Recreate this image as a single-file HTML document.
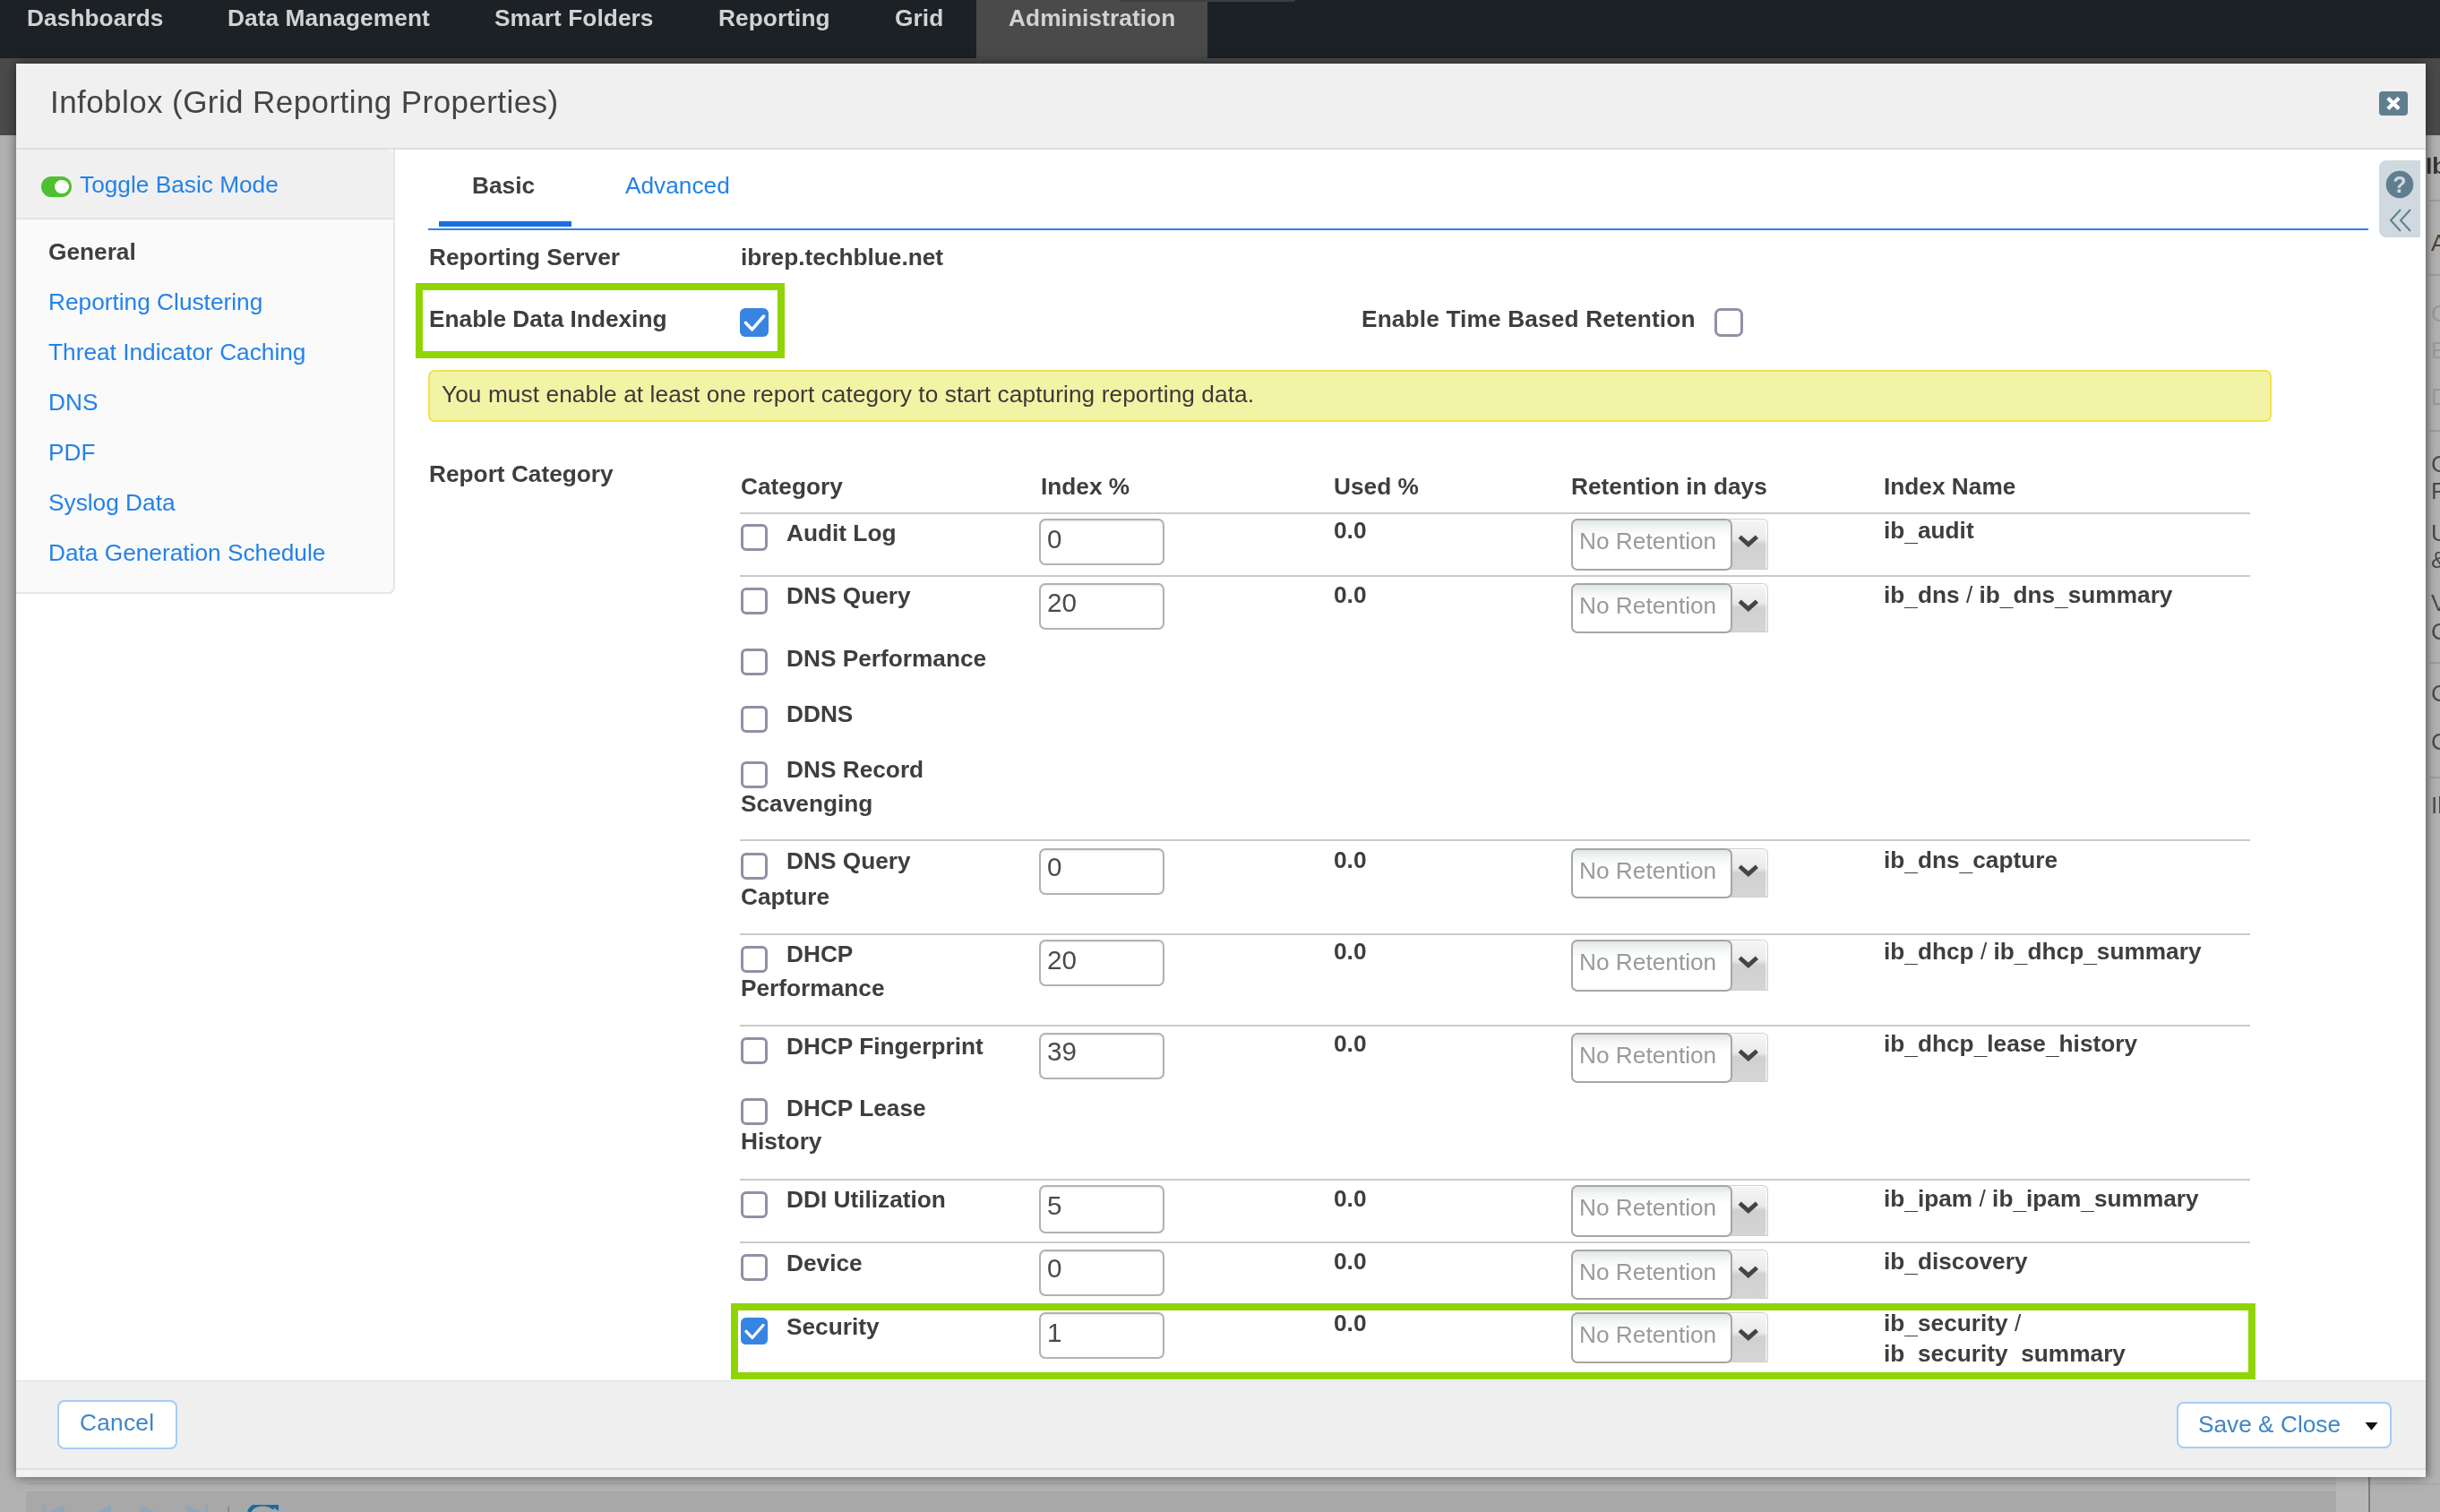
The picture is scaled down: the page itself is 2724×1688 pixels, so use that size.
<!DOCTYPE html><html lang="en"><head><meta charset="utf-8"><title>Infoblox (Grid Reporting Properties)</title><style>
*{box-sizing:border-box;margin:0;padding:0}
html,body{width:2724px;height:1688px;overflow:hidden}
body{position:relative;background:#b2b2b2;font-family:"Liberation Sans",sans-serif;font-size:26.25px;color:#333;}
.a{position:absolute}
.t{position:absolute;display:block;will-change:transform;white-space:nowrap;line-height:30px;height:30px;font-size:26.25px}
.b{font-weight:bold;color:#3e3e3e}
.u{position:relative;top:2.6px}
.lnk{color:#2482e8}
.nav{color:#d2d2d2;font-weight:bold}
.hl{position:absolute;height:2px;background:#cacaca;left:826px;width:1686px}
.cb{position:absolute;width:30px;height:30px;border:3px solid #9190a6;border-radius:6px;background:#fff}
.cbc{position:absolute;width:32px;height:32px;border-radius:6px;background:#3884e2}
.inp{position:absolute;left:1160px;width:140px;border:2px solid #b2b2b2;border-radius:7px;background:#fff;box-shadow:inset 0 1px 2px rgba(0,0,0,.10)}
.cmb{position:absolute;left:1754px;width:180px;border:2px solid #a6a6a6;border-radius:7px;background:linear-gradient(#dfe5e7 0,#f3f5f5 8px,#fff 19px);z-index:2}
.trg{position:absolute;left:1930px;width:44px;border:1px solid #cfcfd6;border-left:none;border-radius:0 6px 0 0;background:linear-gradient(#f6f6f6 0,#eaeaea 40%,#d0d0d0 50%,#d5d5d5 100%);box-shadow:inset -2px 1px 0 rgba(255,255,255,.55);z-index:1}
.gbox{position:absolute;border:8px solid #91d404;z-index:5}
</style></head><body>
<div class="a" style="left:0px;top:0px;width:2724px;height:65px;background:#1c2126"></div>
<div class="a" style="left:0px;top:65px;width:2724px;height:86px;background:#4a4a4a"></div>
<div class="a" style="left:1090px;top:0px;width:258px;height:70px;background:#4a4a4a"></div>
<div class="a" style="left:1250px;top:0px;width:196px;height:2px;background:#3b3d40;border-radius:0 0 4px 4px"></div>
<div class="t nav" style="left:29.8px;top:4.7px;letter-spacing:.08px">Dashboards</div>
<div class="t nav" style="left:254.2px;top:4.7px;letter-spacing:.08px">Data Management</div>
<div class="t nav" style="left:551.9px;top:4.7px;letter-spacing:.08px">Smart Folders</div>
<div class="t nav" style="left:801.8px;top:4.7px;letter-spacing:.08px">Reporting</div>
<div class="t nav" style="left:999.2px;top:4.7px;letter-spacing:.08px">Grid</div>
<div class="t nav" style="left:1126.0px;top:4.7px;letter-spacing:.08px">Administration</div>
<div class="a" style="left:29px;top:1665px;width:2579px;height:23px;background:#a8a8a8"></div>
<div class="a" style="left:29px;top:1656px;width:2695px;height:1px;background:#a3a3a3"></div>
<div class="a" style="left:2608px;top:1649px;width:37px;height:39px;background:#b8b8b8"></div>
<div class="a" style="left:2644px;top:1649px;width:2px;height:39px;background:#7d7d7d"></div>
<div class="a" style="left:2708px;top:151px;width:16px;height:1498px;background:linear-gradient(90deg,#9c9c9c 0,#acacac 5px,#b2b2b2 10px)"></div>
<div class="t b" style="left:2708.0px;top:170.0px;color:#333">Ib</div>
<div class="a" style="left:2712px;top:223px;width:12px;height:2px;background:#9c9c9c"></div>
<div class="a" style="left:2712px;top:306px;width:12px;height:2px;background:#9c9c9c"></div>
<div class="a" style="left:2712px;top:480px;width:12px;height:2px;background:#9c9c9c"></div>
<div class="a" style="left:2712px;top:739px;width:12px;height:2px;background:#9c9c9c"></div>
<div class="a" style="left:2712px;top:867px;width:12px;height:2px;background:#9c9c9c"></div>
<div class="t " style="left:2713.5px;top:256.0px;color:#4d4438">A</div>
<div class="t " style="left:2713.5px;top:335.0px;color:#9a9a9a">C</div>
<div class="t " style="left:2713.5px;top:376.0px;color:#9a9a9a">E</div>
<div class="t " style="left:2713.5px;top:428.0px;color:#9a9a9a">D</div>
<div class="t " style="left:2713.5px;top:503.0px;color:#4a4a4a">G</div>
<div class="t " style="left:2713.5px;top:533.0px;color:#4a4a4a">F</div>
<div class="t " style="left:2713.5px;top:580.0px;color:#4a4a4a">U</div>
<div class="t " style="left:2713.5px;top:610.0px;color:#4a4a4a">&amp;</div>
<div class="t " style="left:2713.5px;top:658.0px;color:#4a4a4a">V</div>
<div class="t " style="left:2713.5px;top:690.0px;color:#4a4a4a">C</div>
<div class="t " style="left:2713.5px;top:759.0px;color:#4a4a4a">C</div>
<div class="t " style="left:2713.5px;top:813.0px;color:#4a4a4a">C</div>
<div class="t " style="left:2713.5px;top:884.0px;color:#4a4a4a">Il</div>
<svg class="a" style="left:48px;top:1680px" width="26" height="8" viewBox="0 0 26 8"><path d="M0 0 L3 0 L3 8 L0 8 Z M24 0 L24 8 L6 8 Z" fill="#8fa6b8"/></svg>
<svg class="a" style="left:108px;top:1680px" width="26" height="8" viewBox="0 0 26 8"><path d="M16 0 L16 8 L0 8 Z" fill="#8fa6b8"/></svg>
<svg class="a" style="left:157px;top:1680px" width="26" height="8" viewBox="0 0 26 8"><path d="M0 0 L0 8 L16 8 Z" fill="#8fa6b8"/></svg>
<svg class="a" style="left:208px;top:1680px" width="26" height="8" viewBox="0 0 26 8"><path d="M0 0 L0 8 L18 8 Z M21 0 L24 0 L24 8 L21 8 Z" fill="#8fa6b8"/></svg>
<div class="a" style="left:254px;top:1682px;width:2px;height:6px;background:#8a8a8a"></div>
<svg class="a" style="left:276px;top:1680px" width="36" height="8" viewBox="0 0 36 8"><path d="M2 8 A16 12 0 0 1 30 4" fill="none" stroke="#1d6aa3" stroke-width="4.5"/><path d="M26 0 L35 0 L35 7 Z" fill="#1d6aa3"/></svg>
<div class="a" style="left:18px;top:71px;width:2690px;height:1578px;background:#fff;box-shadow:0 0 12px rgba(0,0,0,.5)"></div>
<div class="a" style="left:18px;top:71px;width:2690px;height:95px;background:#f0f0f0"></div>
<div class="a" style="left:18px;top:165px;width:2690px;height:2px;background:#dedede"></div>
<h1 class="t " style="left:55.8px;top:93.0px;font-size:35px;line-height:42px;height:42px;color:#444;letter-spacing:.42px;font-weight:normal">Infoblox (Grid Reporting Properties)</h1>
<div class="a" style="left:2656px;top:102px;width:32px;height:27px;background:#5f7f8f;border-radius:4px"><svg width="32" height="27" viewBox="0 0 32 27"><path d="M9.8 7.4 L22.2 19.6 M22.2 7.4 L9.8 19.6" stroke="#fff" stroke-width="4.2" stroke-linecap="butt"/></svg></div>
<div class="a" style="left:18px;top:167px;width:423px;height:496px;background:#fafafa;border-right:2px solid #e6e6e6;border-bottom:2px solid #e6e6e6;border-radius:0 0 7px 0"></div>
<div class="a" style="left:18px;top:167px;width:421px;height:77px;background:#f0f0f0;border-radius:0 7px 0 0"></div>
<div class="a" style="left:18px;top:243px;width:421px;height:2px;background:#e2e2e2"></div>
<div class="a" style="left:46px;top:196.5px;width:34px;height:23.5px;border-radius:12px;background:#4fc02f"><div class="a" style="left:15px;top:4px;width:15.5px;height:15.5px;border-radius:50%;background:#fff"></div></div>
<a class="t lnk" style="left:88.6px;top:190.6px;">Toggle Basic Mode</a>
<div class="t b" style="left:54.3px;top:266.4px;">General</div>
<a class="t lnk" style="left:54.3px;top:322.0px;">Reporting Clustering</a>
<a class="t lnk" style="left:54.3px;top:378.0px;">Threat Indicator Caching</a>
<a class="t lnk" style="left:54.3px;top:434.0px;">DNS</a>
<a class="t lnk" style="left:54.3px;top:490.0px;">PDF</a>
<a class="t lnk" style="left:54.3px;top:546.0px;">Syslog Data</a>
<a class="t lnk" style="left:54.3px;top:602.0px;">Data Generation Schedule</a>
<div class="t b" style="left:526.8px;top:192.0px;">Basic</div>
<a class="t lnk" style="left:698.0px;top:192.0px;">Advanced</a>
<div class="a" style="left:490px;top:247px;width:148px;height:6px;background:#1b6fe0"></div>
<div class="a" style="left:478px;top:255px;width:2166px;height:2px;background:#2b84e8"></div>
<div class="a" style="left:2656px;top:179px;width:46px;height:86px;background:#d0d9df;border-radius:8px 0 0 8px"></div>
<svg class="a" style="left:2663px;top:190px" width="32" height="32" viewBox="0 0 32 32"><circle cx="16" cy="16" r="15.3" fill="#5f7f8f"/><text x="16" y="25" text-anchor="middle" font-family="Liberation Sans, sans-serif" font-weight="bold" font-size="25" fill="#d0d9df">?</text></svg>
<svg class="a" style="left:2666px;top:232px" width="28" height="28" viewBox="0 0 28 28"><path d="M14 2 L3 14 L14 26 M25 2 L14 14 L25 26" fill="none" stroke="#5f7f8f" stroke-width="2"/></svg>
<div class="t b" style="left:478.8px;top:272.0px;">Reporting Server</div>
<div class="t b" style="left:826.9px;top:272.0px;">ibrep.techblue.net</div>
<div class="t b" style="left:478.8px;top:341.0px;">Enable Data Indexing</div>
<div class="t b" style="left:1519.8px;top:341.4px;letter-spacing:.15px">Enable Time Based Retention</div>
<div class="cbc" style="left:826px;top:343.5px;height:32.5px"><svg width="32" height="32" viewBox="0 0 32 32" style="position:absolute;left:0;top:0"><path d="M6.4 16.3 L13.6 23.9 L26.6 9" fill="none" stroke="#fff" stroke-width="3.5" stroke-linecap="round" stroke-linejoin="round"/></svg></div>
<div class="cb" style="left:1914px;top:344px;width:32px;height:32px;border-radius:7px"></div>
<div class="gbox" style="left:464px;top:316px;width:412px;height:84px"></div>
<div class="a" style="left:478px;top:413px;width:2058px;height:58px;background:#f3f3a6;border:2px solid #f2e24c;border-radius:7px"></div>
<div class="t " style="left:493.4px;top:424.8px;color:#3a3a3a;letter-spacing:.08px">You must enable at least one report category to start capturing reporting data.</div>
<div class="t b" style="left:478.8px;top:514.0px;">Report Category</div>
<div class="t b" style="left:827.0px;top:528.0px;">Category</div>
<div class="t b" style="left:1161.5px;top:528.0px;">Index %</div>
<div class="t b" style="left:1489.3px;top:528.0px;">Used %</div>
<div class="t b" style="left:1754.0px;top:528.0px;">Retention in days</div>
<div class="t b" style="left:2103.3px;top:528.0px;">Index Name</div>
<div class="hl" style="top:572px"></div>
<div class="hl" style="top:642px"></div>
<div class="hl" style="top:937px"></div>
<div class="hl" style="top:1042px"></div>
<div class="hl" style="top:1144px"></div>
<div class="hl" style="top:1316px"></div>
<div class="hl" style="top:1386px"></div>
<div class="a" style="left:0;top:0;width:2724px;height:1525px;overflow:hidden">
<div class="cb" style="left:827px;top:585.0px"></div>
<div class="t b" style="left:878.0px;top:580.3px;">Audit Log</div>
<div class="inp" style="top:579px;height:52px"></div>
<div class="t " style="left:1169.4px;top:584.1px;font-size:29.6px;line-height:36px;height:36px;color:#4a4a4a">0</div>
<div class="t b" style="left:1489.0px;top:576.7px;">0.0</div>
<div class="cmb" style="top:579px;height:58px"></div>
<div class="t " style="left:1762.6px;top:589.1px;color:#9a9a9a;z-index:3">No Retention</div>
<div class="trg" style="top:579px;height:57px"><svg width="44" height="57" viewBox="0 0 44 57" style="position:absolute;left:0;top:0"><path d="M12.2 19.2 L21.8 27.8 L31.4 19.2" fill="none" stroke="#444" stroke-width="4.8"/></svg></div>
<div class="t b" style="left:2103.3px;top:576.7px;">ib<span class="u">_</span>audit</div>
<div class="cb" style="left:827px;top:655.5px"></div>
<div class="t b" style="left:878.0px;top:650.0px;">DNS Query</div>
<div class="inp" style="top:651px;height:52px"></div>
<div class="t " style="left:1169.4px;top:654.5px;font-size:29.6px;line-height:36px;height:36px;color:#4a4a4a">20</div>
<div class="t b" style="left:1489.0px;top:648.6px;">0.0</div>
<div class="cmb" style="top:651px;height:56px"></div>
<div class="t " style="left:1762.6px;top:661.3px;color:#9a9a9a;z-index:3">No Retention</div>
<div class="trg" style="top:651px;height:55px"><svg width="44" height="55" viewBox="0 0 44 55" style="position:absolute;left:0;top:0"><path d="M12.2 19.2 L21.8 27.8 L31.4 19.2" fill="none" stroke="#444" stroke-width="4.8"/></svg></div>
<div class="t b" style="left:2103.3px;top:648.6px;">ib<span class="u">_</span>dns <span style="font-weight:normal">/</span> ib<span class="u">_</span>dns<span class="u">_</span>summary</div>
<div class="cb" style="left:827px;top:723.8px"></div>
<div class="t b" style="left:878.0px;top:720.4px;">DNS Performance</div>
<div class="cb" style="left:827px;top:787.6px"></div>
<div class="t b" style="left:878.0px;top:782.0px;">DDNS</div>
<div class="cb" style="left:827px;top:849.8px"></div>
<div class="t b" style="left:878.0px;top:844.0px;">DNS Record</div>
<div class="t b" style="left:827.0px;top:881.5px;">Scavenging</div>
<div class="cb" style="left:827px;top:951.6px"></div>
<div class="t b" style="left:878.0px;top:945.7px;">DNS Query</div>
<div class="t b" style="left:827.0px;top:986.0px;">Capture</div>
<div class="inp" style="top:947px;height:52px"></div>
<div class="t " style="left:1169.4px;top:950.0px;font-size:29.6px;line-height:36px;height:36px;color:#4a4a4a">0</div>
<div class="t b" style="left:1489.0px;top:944.5px;">0.0</div>
<div class="cmb" style="top:947px;height:56px"></div>
<div class="t " style="left:1762.6px;top:957.3px;color:#9a9a9a;z-index:3">No Retention</div>
<div class="trg" style="top:947px;height:55px"><svg width="44" height="55" viewBox="0 0 44 55" style="position:absolute;left:0;top:0"><path d="M12.2 19.2 L21.8 27.8 L31.4 19.2" fill="none" stroke="#444" stroke-width="4.8"/></svg></div>
<div class="t b" style="left:2103.3px;top:944.5px;">ib<span class="u">_</span>dns<span class="u">_</span>capture</div>
<div class="cb" style="left:827px;top:1055.5px"></div>
<div class="t b" style="left:878.0px;top:1050.0px;">DHCP</div>
<div class="t b" style="left:827.0px;top:1088.4px;">Performance</div>
<div class="inp" style="top:1049px;height:52px"></div>
<div class="t " style="left:1169.4px;top:1054.2px;font-size:29.6px;line-height:36px;height:36px;color:#4a4a4a">20</div>
<div class="t b" style="left:1489.0px;top:1046.7px;">0.0</div>
<div class="cmb" style="top:1049px;height:58px"></div>
<div class="t " style="left:1762.6px;top:1059.0px;color:#9a9a9a;z-index:3">No Retention</div>
<div class="trg" style="top:1049px;height:57px"><svg width="44" height="57" viewBox="0 0 44 57" style="position:absolute;left:0;top:0"><path d="M12.2 19.2 L21.8 27.8 L31.4 19.2" fill="none" stroke="#444" stroke-width="4.8"/></svg></div>
<div class="t b" style="left:2103.3px;top:1046.7px;">ib<span class="u">_</span>dhcp <span style="font-weight:normal">/</span> ib<span class="u">_</span>dhcp<span class="u">_</span>summary</div>
<div class="cb" style="left:827px;top:1157.8px"></div>
<div class="t b" style="left:878.0px;top:1152.8px;">DHCP Fingerprint</div>
<div class="inp" style="top:1153px;height:52px"></div>
<div class="t " style="left:1169.4px;top:1156.3px;font-size:29.6px;line-height:36px;height:36px;color:#4a4a4a">39</div>
<div class="t b" style="left:1489.0px;top:1150.4px;">0.0</div>
<div class="cmb" style="top:1153px;height:56px"></div>
<div class="t " style="left:1762.6px;top:1162.9px;color:#9a9a9a;z-index:3">No Retention</div>
<div class="trg" style="top:1153px;height:55px"><svg width="44" height="55" viewBox="0 0 44 55" style="position:absolute;left:0;top:0"><path d="M12.2 19.2 L21.8 27.8 L31.4 19.2" fill="none" stroke="#444" stroke-width="4.8"/></svg></div>
<div class="t b" style="left:2103.3px;top:1150.4px;">ib<span class="u">_</span>dhcp<span class="u">_</span>lease<span class="u">_</span>history</div>
<div class="cb" style="left:827px;top:1225.5px"></div>
<div class="t b" style="left:878.0px;top:1221.6px;">DHCP Lease</div>
<div class="t b" style="left:827.0px;top:1259.0px;">History</div>
<div class="cb" style="left:827px;top:1329.6px"></div>
<div class="t b" style="left:878.0px;top:1324.3px;">DDI Utilization</div>
<div class="inp" style="top:1323px;height:54px"></div>
<div class="t " style="left:1169.4px;top:1328.2px;font-size:29.6px;line-height:36px;height:36px;color:#4a4a4a">5</div>
<div class="t b" style="left:1489.0px;top:1322.6px;">0.0</div>
<div class="cmb" style="top:1323px;height:58px"></div>
<div class="t " style="left:1762.6px;top:1332.9px;color:#9a9a9a;z-index:3">No Retention</div>
<div class="trg" style="top:1323px;height:57px"><svg width="44" height="57" viewBox="0 0 44 57" style="position:absolute;left:0;top:0"><path d="M12.2 19.2 L21.8 27.8 L31.4 19.2" fill="none" stroke="#444" stroke-width="4.8"/></svg></div>
<div class="t b" style="left:2103.3px;top:1322.6px;">ib<span class="u">_</span>ipam <span style="font-weight:normal">/</span> ib<span class="u">_</span>ipam<span class="u">_</span>summary</div>
<div class="cb" style="left:827px;top:1399.8px"></div>
<div class="t b" style="left:878.0px;top:1394.5px;">Device</div>
<div class="inp" style="top:1395px;height:52px"></div>
<div class="t " style="left:1169.4px;top:1398.0px;font-size:29.6px;line-height:36px;height:36px;color:#4a4a4a">0</div>
<div class="t b" style="left:1489.0px;top:1392.7px;">0.0</div>
<div class="cmb" style="top:1395px;height:56px"></div>
<div class="t " style="left:1762.6px;top:1405.0px;color:#9a9a9a;z-index:3">No Retention</div>
<div class="trg" style="top:1395px;height:55px"><svg width="44" height="55" viewBox="0 0 44 55" style="position:absolute;left:0;top:0"><path d="M12.2 19.2 L21.8 27.8 L31.4 19.2" fill="none" stroke="#444" stroke-width="4.8"/></svg></div>
<div class="t b" style="left:2103.3px;top:1392.7px;">ib<span class="u">_</span>discovery</div>
<div class="cbc" style="left:827px;top:1470.5px;transform:scale(.94);transform-origin:0 0"><svg width="32" height="32" viewBox="0 0 32 32" style="position:absolute;left:0;top:0"><path d="M6.4 16.3 L13.6 23.9 L26.6 9" fill="none" stroke="#fff" stroke-width="3.5" stroke-linecap="round" stroke-linejoin="round"/></svg></div>
<div class="t b" style="left:878.0px;top:1466.4px;">Security</div>
<div class="inp" style="top:1465px;height:52px"></div>
<div class="t " style="left:1169.4px;top:1470.0px;font-size:29.6px;line-height:36px;height:36px;color:#4a4a4a">1</div>
<div class="t b" style="left:1489.0px;top:1462.0px;">0.0</div>
<div class="cmb" style="top:1465px;height:57px"></div>
<div class="t " style="left:1762.6px;top:1475.0px;color:#9a9a9a;z-index:3">No Retention</div>
<div class="trg" style="top:1465px;height:56px"><svg width="44" height="56" viewBox="0 0 44 56" style="position:absolute;left:0;top:0"><path d="M12.2 19.2 L21.8 27.8 L31.4 19.2" fill="none" stroke="#444" stroke-width="4.8"/></svg></div>
<div class="t b" style="left:2103.3px;top:1462.0px;">ib<span class="u">_</span>security <span style="font-weight:normal">/</span></div>
<div class="t b" style="left:2103.3px;top:1496.3px;">ib<span class="u">_</span>security<span class="u">_</span>summary</div>
</div>
<div class="gbox" style="left:816px;top:1455px;width:1702px;height:85px"></div>
<div class="a" style="left:18px;top:1541px;width:2690px;height:107px;background:#efefef;z-index:4"></div>
<div class="a" style="left:18px;top:1541px;width:2690px;height:1px;background:#e0e0e0;z-index:4"></div>
<div class="a" style="left:18px;top:1639px;width:2690px;height:2px;background:#e0e0e0;z-index:4"></div>
<div class="a" style="left:18px;top:1641px;width:2690px;height:8px;background:#f2f2f2;z-index:4"></div>
<div class="a" style="left:64px;top:1563px;width:134px;height:55px;background:#fff;border:2px solid #a6ccf5;border-radius:8px;z-index:6"></div>
<div class="t " style="left:89.1px;top:1573.0px;color:#3f86c8;z-index:7;letter-spacing:.25px">Cancel</div>
<div class="a" style="left:2430px;top:1565px;width:240px;height:52px;background:#fff;border:2px solid #a6ccf5;border-radius:8px;z-index:6"></div>
<div class="t " style="left:2454.1px;top:1575.0px;color:#3f86c8;z-index:7">Save &amp; Close</div>
<svg class="a" style="left:2640px;top:1588px;z-index:7" width="15" height="9" viewBox="0 0 15 9"><path d="M0.5 0 L14.5 0 L7.5 8.8 Z" fill="#111"/></svg>
</body></html>
